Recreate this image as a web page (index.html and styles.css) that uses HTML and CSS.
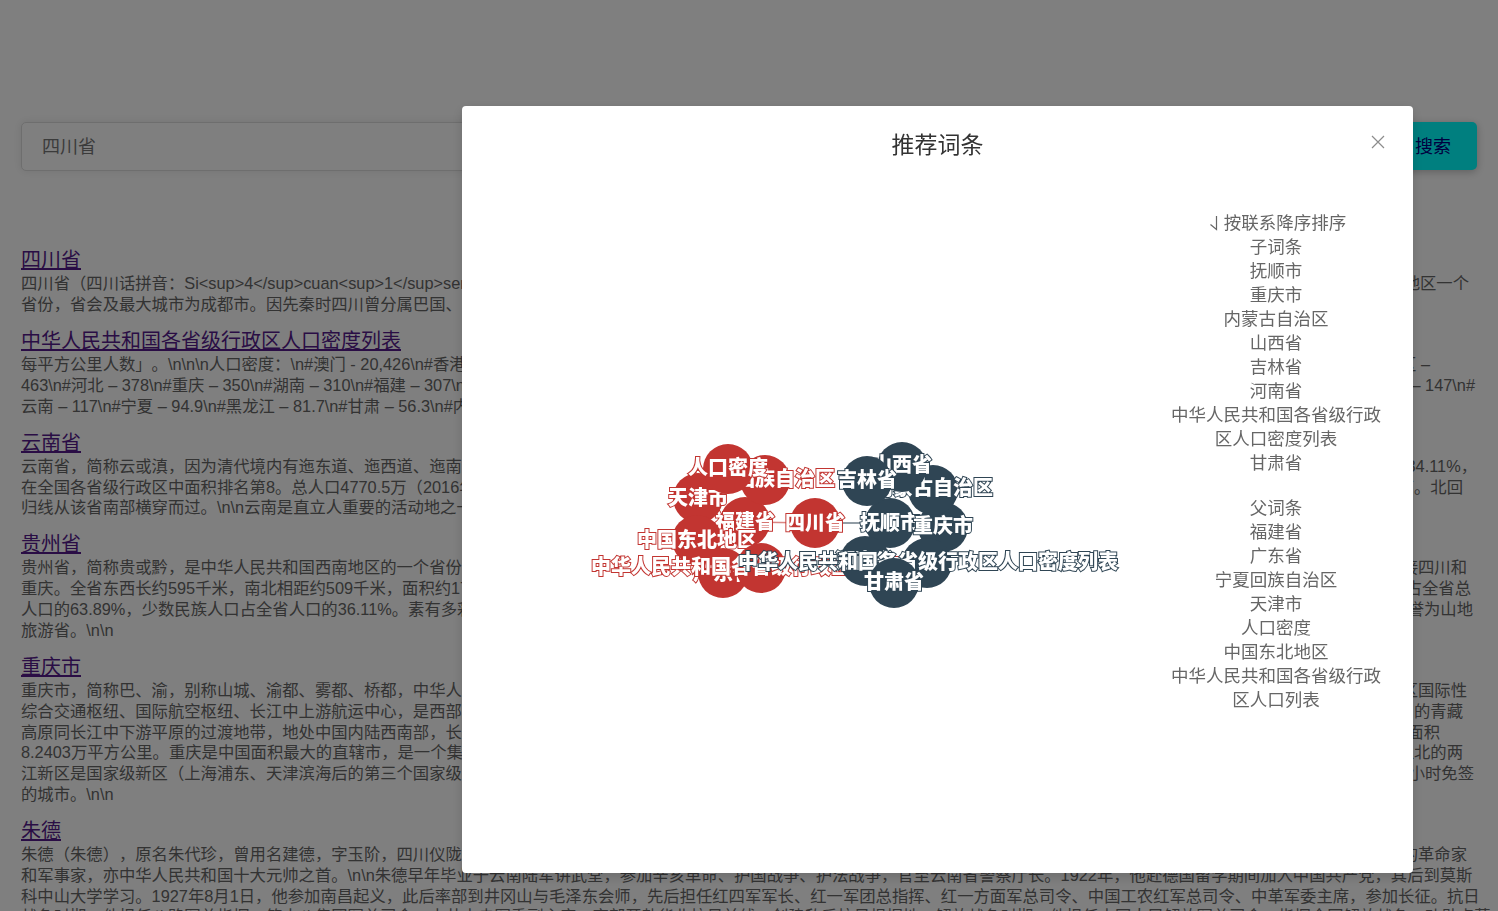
FILE: index.html
```html
<!DOCTYPE html>
<html lang="zh">
  <head>
    <meta charset="UTF-8" />
    <title>词条搜索</title>
    <link rel="stylesheet" href="styles.css">
  </head>
  <body>
    <div class="page">
      <div class="search">
        <input class="search-input" type="text" value="四川省">
        <button class="search-btn">搜索</button>
      </div>

      <div class="result">
        <a class="result-title" href="#">四川省</a>
        <div class="row r8"><span>四川省（四川话拼音：Si&lt;sup&gt;4&lt;/sup&gt;cuan&lt;sup&gt;1&lt;/sup&gt;sen&lt;sup&gt;3&lt;/sup&gt;），简称川或蜀</span><span>地区一个</span></div>
        <div class="row"><span>省份，省会及最大城市为成都市。因先秦时四川曾分属巴国、蜀国</span></div>
      </div>

      <div class="result">
        <a class="result-title" href="#">中华人民共和国各省级行政区人口密度列表</a>
        <div class="row r47"><span>每平方公里人数」。\n\n\n人口密度：\n#澳门 - 20,426\n#香港 - 6,300</span><span>区 –</span></div>
        <div class="row r2"><span>463\n#河北 – 378\n#重庆 – 350\n#湖南 – 310\n#福建 – 307\n#海南 – 250</span><span>– 147\n#</span></div>
        <div class="row"><span>云南 – 117\n#宁夏 – 94.9\n#黑龙江 – 81.7\n#甘肃 – 56.3\n#内蒙古 – 20</span></div>
      </div>

      <div class="result">
        <a class="result-title" href="#">云南省</a>
        <div class="row"><span>云南省，简称云或滇，因为清代境内有迤东道、迤西道、迤南道三道</span><span>34.11%，</span></div>
        <div class="row r14"><span>在全国各省级行政区中面积排名第8。总人口4770.5万（2016年）</span><span>南。北回</span></div>
        <div class="row"><span>归线从该省南部横穿而过。\n\n云南是直立人重要的活动地之一</span></div>
      </div>

      <div class="result">
        <a class="result-title" href="#">贵州省</a>
        <div class="row r10"><span>贵州省，简称贵或黔，是中华人民共和国西南地区的一个省份，东靠</span><span>接四川和</span></div>
        <div class="row r6"><span>重庆。全省东西长约595千米，南北相距约509千米，面积约17.6万</span><span>占全省总</span></div>
        <div class="row r4"><span>人口的63.89%，少数民族人口占全省人口的36.11%。素有多彩贵州</span><span>誉为山地</span></div>
        <div class="row"><span>旅游省。\n\n</span></div>
      </div>

      <div class="result">
        <a class="result-title" href="#">重庆市</a>
        <div class="row r10"><span>重庆市，简称巴、渝，别称山城、渝都、雾都、桥都，中华人民共和国</span><span>区国际性</span></div>
        <div class="row r14"><span>综合交通枢纽、国际航空枢纽、长江中上游航运中心，是西部大开发</span><span>内的青藏</span></div>
        <div class="row r37"><span>高原同长江中下游平原的过渡地带，地处中国内陆西南部，长江上游</span><span>面积</span></div>
        <div class="row r14"><span>8.2403万平方公里。重庆是中国面积最大的直辖市，是一个集大城市</span><span>江北的两</span></div>
        <div class="row r3"><span>江新区是国家级新区（上海浦东、天津滨海后的第三个国家级新区）</span><span>小时免签</span></div>
        <div class="row"><span>的城市。\n\n</span></div>
      </div>

      <div class="result">
        <a class="result-title" href="#">朱德</a>
        <div class="row r10"><span>朱德（朱德），原名朱代珍，曾用名建德，字玉阶，四川仪陇县人</span><span>的革命家</span></div>
        <div class="row"><span>和军事家，亦中华人民共和国十大元帅之首。\n\n朱德早年毕业于云南陆军讲武堂，参加辛亥革命、护国战争、护法战争，官至云南省警察厅长。1922年，他赴德国留学期间加入中国共产党，其后到莫斯</span></div>
        <div class="row"><span>科中山大学学习。1927年8月1日，他参加南昌起义，此后率部到井冈山与毛泽东会师，先后担任红四军军长、红一军团总指挥、红一方面军总司令、中国工农红军总司令、中革军委主席，参加长征。抗日</span></div>
        <div class="row"><span>战争时期，他担任八路军总指挥、第十八集团军总司令、中共中央军委副主席，率部开赴华北抗日前线，创建敌后抗日根据地。解放战争时期，他担任中国人民解放军总司令，指挥全国解放战争，功勋卓著</span></div>
      </div>
    </div>

    <div class="mask">
      <div class="modal">
        <div class="modal-head">
          <h2 class="modal-title">推荐词条</h2>
          <svg class="modal-close" width="14" height="14" viewBox="0 0 14 14">
            <path d="M1 1 L13 13 M13 1 L1 13" />
          </svg>
        </div>
        <div class="modal-body">
          <svg class="graph" width="704" height="689" viewBox="462 184 704 689">
            <line class="edge-parent" x1="815" y1="523" x2="745" y2="522" />
            <line class="edge-child" x1="815" y1="523" x2="890" y2="523" />

            <g class="node parent"><circle cx="815" cy="523" r="25" /><text x="815" y="523">四川省</text></g>
            <g class="node parent"><circle cx="745" cy="522" r="25" /><text x="745" y="522">福建省</text></g>
            <g class="node parent"><circle cx="723" cy="573" r="25" /><text x="723" y="573">广东省</text></g>
            <g class="node parent"><circle cx="765" cy="480" r="25" /><text x="765" y="479">宁夏回族自治区</text></g>
            <g class="node parent"><circle cx="698" cy="498" r="25" /><text x="698" y="498">天津市</text></g>
            <g class="node parent"><circle cx="728" cy="469" r="25" /><text x="728" y="468">人口密度</text></g>
            <g class="node parent"><circle cx="697" cy="540" r="25" /><text x="697" y="540">中国东北地区</text></g>
            <g class="node parent"><circle cx="761" cy="568" r="25" /><text x="761" y="567">中华人民共和国各省级行政区人口列表</text></g>

            <g class="node child"><circle cx="890" cy="523" r="25" /><text x="890" y="523">抚顺市</text></g>
            <g class="node child"><circle cx="943" cy="527" r="25" /><text x="943" y="526">重庆市</text></g>
            <g class="node child"><circle cx="933" cy="490" r="25" /><text x="933" y="488">内蒙古自治区</text></g>
            <g class="node child"><circle cx="902" cy="467" r="25" /><text x="902" y="465">山西省</text></g>
            <g class="node child"><circle cx="867" cy="481" r="25" /><text x="867" y="480">吉林省</text></g>
            <g class="node child"><circle cx="865" cy="561" r="25" /><text x="865" y="561">河南省</text></g>
            <g class="node child"><circle cx="927" cy="563" r="25" /><text x="928" y="562">中华人民共和国各省级行政区人口密度列表</text></g>
            <g class="node child"><circle cx="894" cy="583" r="25" /><text x="894" y="582">甘肃省</text></g>
          </svg>

          <div class="terms">
            <div class="terms-group">
              <div class="sort">
                <svg class="sort-icon" width="9" height="16" viewBox="0 0 9 16"><path d="M7.5 1 V14.5 L1.5 9.5" /></svg>
                按联系降序排序
              </div>
              <div>子词条</div>
              <div>抚顺市</div>
              <div>重庆市</div>
              <div>内蒙古自治区</div>
              <div>山西省</div>
              <div>吉林省</div>
              <div>河南省</div>
              <div>中华人民共和国各省级行政区人口密度列表</div>
              <div>甘肃省</div>
            </div>
            <div class="terms-group">
              <div>父词条</div>
              <div>福建省</div>
              <div>广东省</div>
              <div>宁夏回族自治区</div>
              <div>天津市</div>
              <div>人口密度</div>
              <div>中国东北地区</div>
              <div>中华人民共和国各省级行政区人口列表</div>
            </div>
          </div>
        </div>
      </div>
    </div>
  </body>
</html>
```

FILE: styles.css
```css
html, body {
  height: 100%;
  overflow: hidden;
}
body {
  margin: 0;
  background-color: #fff;
  color: #666;
  font-family: "Liberation Sans", "Noto Sans CJK SC", sans-serif;
  text-spacing-trim: space-all;
}
.page {
  padding: 122px 21px 0;
}

.search {
  display: flex;
  height: 49px;
  margin-bottom: 77.2px;
}
.search-input {
  flex: 1;
  box-sizing: border-box;
  height: 49px;
  padding: 0 20px 4px;
  border: 1px solid #ddd;
  border-radius: 5px 0 0 5px;
  background: #fff;
  box-shadow: 0 0 10px rgba(0, 0, 0, .1);
  color: #777;
  font: 18px "Liberation Sans", "Noto Sans CJK SC", sans-serif;
}
.search-btn {
  width: 88px;
  height: 48px;
  padding-bottom: 3px;
  border: 0;
  border-radius: 0 5px 5px 0;
  background-color: #00ffff;
  box-shadow: 0 2px 8px rgba(0, 0, 0, .25);
  color: #000080;
  font: 18px "Liberation Sans", "Noto Sans CJK SC", sans-serif;
}

.result {
  margin-bottom: 14.3px;
}
.result-title {
  display: block;
  width: fit-content;
  height: 25px;
  color: #551a8b;
  font-size: 20px;
  line-height: 25px;
}
.row {
  display: flex;
  justify-content: space-between;
  height: 20.8px;
  font-size: 16.33px;
  line-height: 20.8px;
  white-space: nowrap;
}
.r2 { padding-right: 2px; }
.r3 { padding-right: 3px; }
.r4 { padding-right: 4px; }
.r6 { padding-right: 6px; }
.r8 { padding-right: 8px; }
.r10 { padding-right: 10px; }
.r14 { padding-right: 14px; }
.r37 { padding-right: 37px; }
.r47 { padding-right: 47px; }

.mask {
  position: fixed;
  top: 0;
  left: 0;
  right: 0;
  bottom: 0;
  background-color: rgba(0, 0, 0, .5);
}
.modal {
  width: 951px;
  height: 767px;
  margin: 106px 0 0 462px;
  border-radius: 4px;
  background-color: #fff;
  box-shadow: 0 4px 12px rgba(0, 0, 0, .15);
}
.modal-head {
  position: relative;
  height: 78px;
  text-align: center;
}
.modal-title {
  margin: 0;
  padding-top: 22px;
  color: #333;
  font-size: 23px;
  font-weight: normal;
  line-height: 34px;
}
.modal-close {
  position: absolute;
  top: 29px;
  right: 28px;
  fill: none;
  stroke: #8c8c8c;
  stroke-width: 1.2;
}
.modal-body {
  display: flex;
  height: 689px;
}

.graph {
  flex: none;
}
.edge-parent {
  stroke: #c23531;
  stroke-width: 1.5;
  opacity: .6;
}
.edge-child {
  stroke: #2f4554;
  stroke-width: 1.5;
  opacity: .7;
}
.node text {
  fill: #fff;
  stroke-width: 2px;
  paint-order: stroke;
  font-size: 20px;
  font-weight: 900;
  text-anchor: middle;
  dominant-baseline: central;
}
.parent circle { fill: #c23531; }
.parent text { stroke: #c23531; }
.child circle { fill: #2f4554; }
.child text { stroke: #2f4554; }

.terms {
  width: 220px;
  padding-top: 27px;
  color: #666;
  font-size: 17.5px;
  line-height: 24px;
  text-align: center;
}
.terms-group {
  margin-bottom: 21px;
}
.sort {
  padding-left: 3px;
}
.sort-icon {
  margin-right: 1px;
  vertical-align: -2px;
  fill: none;
  stroke: #666;
  stroke-width: 1.2;
}
```
